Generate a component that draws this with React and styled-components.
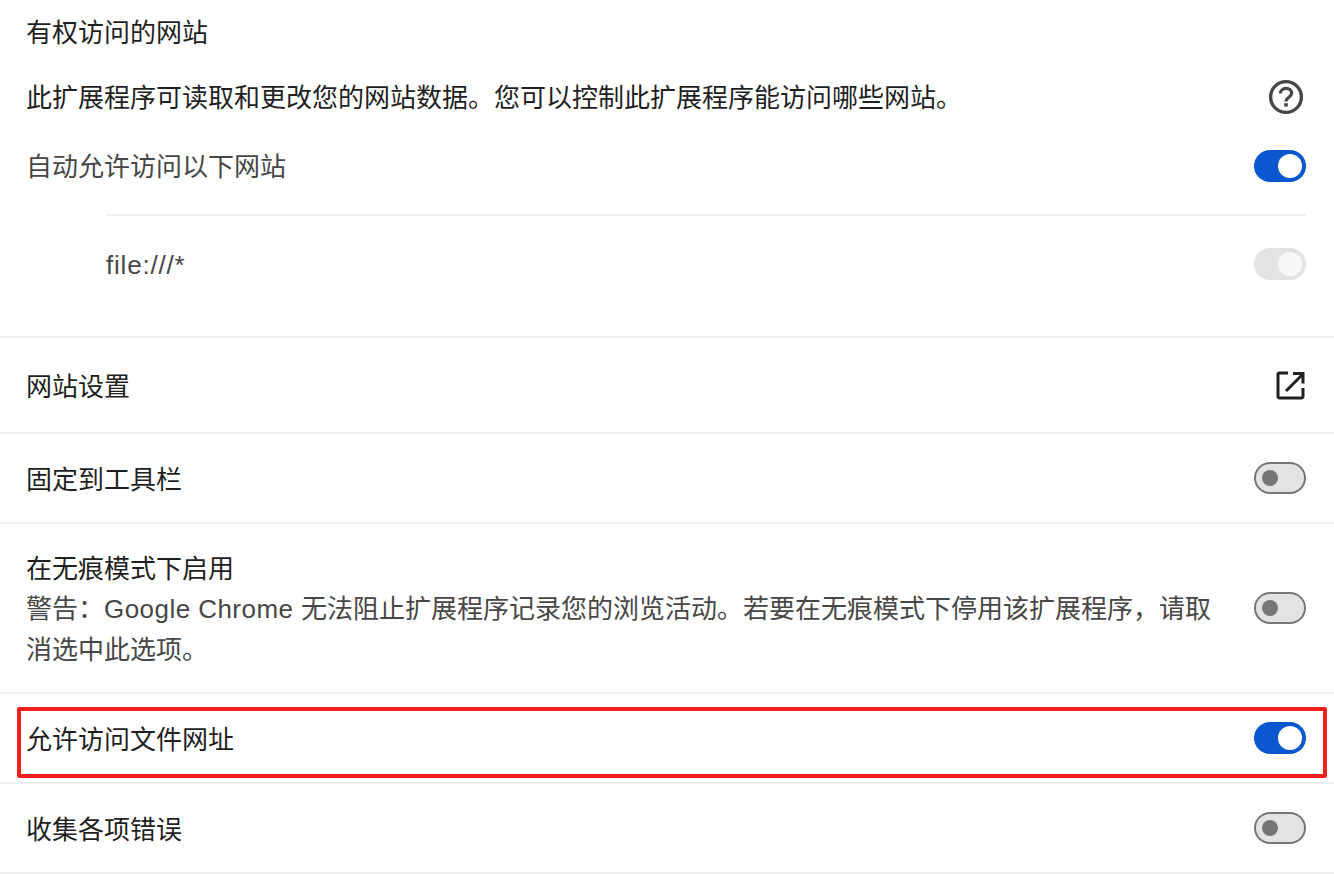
import React from "react";
import styled, { createGlobalStyle } from "styled-components";

const GlobalStyle = createGlobalStyle`
  html, body {
    margin: 0;
    padding: 0;
    background: #ffffff;
    overflow: hidden;
  }
  body {
    font-family: "Liberation Sans", "Noto Sans CJK SC", sans-serif;
    color: #1f1f1f;
  }
`;

const Page = styled.div`
  width: 1334px;
  height: 874px;
  overflow: hidden;
  background: #fff;
`;

const Section = styled.section`
  border-bottom: 2px solid #efefef;
  box-sizing: border-box;
  height: ${(p) => p.$height}px;
`;

const AccessSection = styled(Section)`
  display: flex;
  flex-direction: column;
`;

const Heading = styled.h2`
  margin: 0;
  height: 64px;
  padding-left: 26px;
  font-size: 26px;
  font-weight: 400;
  line-height: 66px;
  color: #1f1f1f;
`;

const Label = styled.span`
  margin-bottom: 2px;
`;

const InfoRow = styled.div`
  display: flex;
  align-items: center;
  justify-content: space-between;
  height: 66px;
  padding: 0 30px 0 26px;
  font-size: 26px;
  color: #1f1f1f;

  ${Label} {
    margin-bottom: 4px;
  }
`;

const AutoRow = styled.div`
  display: flex;
  align-items: center;
  justify-content: space-between;
  height: 72px;
  padding: 0 28px 0 26px;
  font-size: 26px;
  color: #474747;

  ${Label} {
    margin-bottom: 4px;
  }
`;

const SiteRow = styled.div`
  display: flex;
  align-items: center;
  justify-content: space-between;
  margin: 12px 28px 0 106px;
  height: 96px;
  border-top: 2px solid #efefef;
  font-size: 26px;
  color: #474747;
`;

const Row = styled(Section)`
  display: flex;
  align-items: center;
  justify-content: space-between;
  padding: 0 28px 0 26px;
  font-size: 26px;
`;

const Highlight = styled.div`
  position: relative;
`;

const RedBox = styled.div`
  position: absolute;
  left: 17px;
  top: 13px;
  width: 1310px;
  height: 71px;
  box-sizing: border-box;
  border: 4px solid #f5201d;
  border-radius: 2px;
  pointer-events: none;
`;

const Description = styled.div`
  width: 1200px;
  padding-top: 3px;
  line-height: 40.5px;
`;

const Warning = styled.div`
  color: #474747;
`;

const Latin = styled.span`
  letter-spacing: ${(p) => p.$spacing}px;
  margin-top: ${(p) => p.$top || 0}px;
`;

const Track = styled.div`
  position: relative;
  flex: none;
  width: 52px;
  height: 32px;
  box-sizing: border-box;
  border-radius: 16px;
  background: ${(p) => (p.$disabled ? "#e3e3e3" : p.$on ? "#0b57d0" : "#e3e3e1")};
  border: ${(p) => (p.$on || p.$disabled ? "none" : "2px solid #747775")};
`;

const Knob = styled.div`
  position: absolute;
  top: 50%;
  transform: translateY(-50%);
  border-radius: 50%;
  ${(p) =>
    p.$on
      ? `right: 4px; width: 24px; height: 24px; background: ${p.$disabled ? "#f8f8f8" : "#fff"};`
      : "left: 6px; width: 16px; height: 16px; background: #747775;"}
`;

const Toggle = ({ on, disabled }) => (
  <Track $on={on} $disabled={disabled}>
    <Knob $on={on} $disabled={disabled} />
  </Track>
);

const HelpIcon = () => (
  <svg width="36" height="36" viewBox="0 0 36 36" fill="none">
    <circle cx="18" cy="18" r="15.4" stroke="#474747" strokeWidth="3.4" />
    <path
      d="M12.4 14.6c0-3 2.4-5.2 5.6-5.2s5.600 2.100 5.600 4.900c0 3.800-5.600 4-5.600 8.100"
      stroke="#474747"
      strokeWidth="3.2"
    />
    <rect x="16.200" y="24.200" width="3.600" height="3.400" fill="#474747" />
  </svg>
);

const ExternalIcon = () => (
  <svg width="30" height="30" viewBox="0 0 30 30" fill="none">
    <path
      d="M12 3H3.500A1.500 1.500 0 0 0 2 4.500V26.500A1.500 1.500 0 0 0 3.500 28H25.500A1.500 1.500 0 0 0 27 26.500V18"
      stroke="#1f1f1f"
      strokeWidth="3"
    />
    <path d="M10 21L26 5" stroke="#1f1f1f" strokeWidth="3" />
    <path d="M17 3.500H27V13.500" stroke="#1f1f1f" strokeWidth="3" />
  </svg>
);

const App = () => (
  <Page>
    <GlobalStyle />
    <AccessSection $height={338}>
      <Heading>有权访问的网站</Heading>
      <InfoRow>
        <Label>此扩展程序可读取和更改您的网站数据。您可以控制此扩展程序能访问哪些网站。</Label>
        <HelpIcon />
      </InfoRow>
      <AutoRow>
        <Label>自动允许访问以下网站</Label>
        <Toggle on />
      </AutoRow>
      <SiteRow>
        <Latin $spacing={0.8} $top={2}>file:///*</Latin>
        <Toggle on disabled />
      </SiteRow>
    </AccessSection>
    <Row $height={96}>
      <Label>网站设置</Label>
      <ExternalIcon />
    </Row>
    <Row $height={90}>
      <Label>固定到工具栏</Label>
      <Toggle />
    </Row>
    <Row $height={170}>
      <Description>
        在无痕模式下启用
        <Warning>
          警告：<Latin $spacing={0.45}>Google Chrome </Latin>
          无法阻止扩展程序记录您的浏览活动。若要在无痕模式下停用该扩展程序，请取消选中此选项。
        </Warning>
      </Description>
      <Toggle />
    </Row>
    <Highlight>
      <Row $height={90}>
        <Label>允许访问文件网址</Label>
        <Toggle on />
      </Row>
      <RedBox />
    </Highlight>
    <Row $height={90}>
      <Label>收集各项错误</Label>
      <Toggle />
    </Row>
  </Page>
);

export default App;
